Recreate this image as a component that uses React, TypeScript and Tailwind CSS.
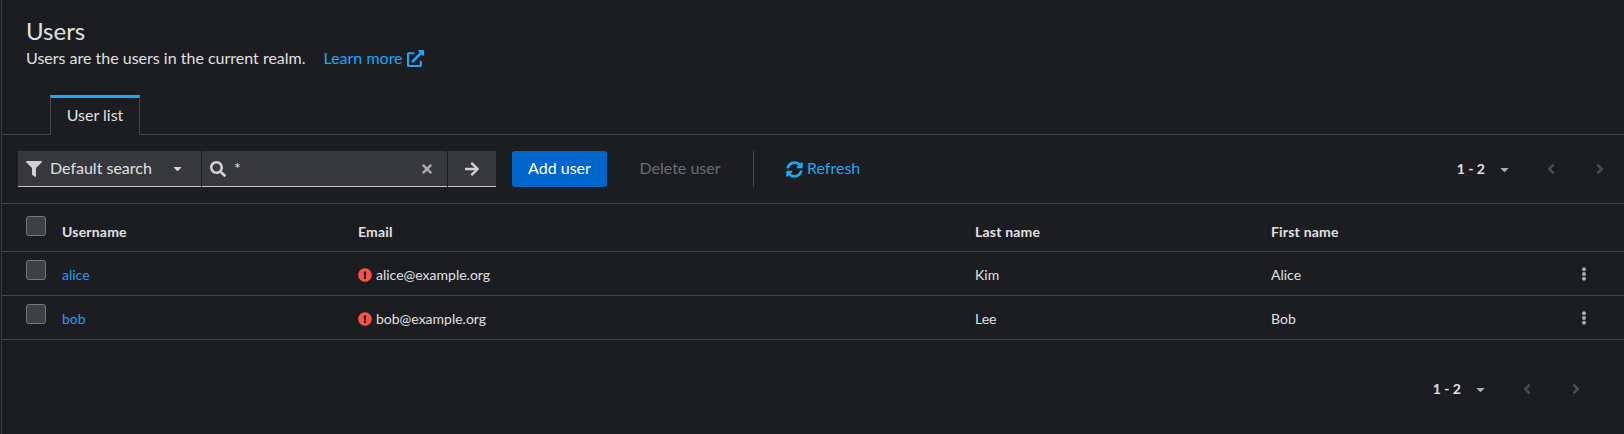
import {
  FaAngleLeft,
  FaAngleRight,
  FaArrowRight,
  FaCaretDown,
  FaEllipsisV,
  FaExclamationCircle,
  FaExternalLinkAlt,
  FaFilter,
  FaSearch,
  FaSyncAlt,
  FaTimes,
} from 'react-icons/fa';

const users = [
  { username: 'alice', email: 'alice@example.org', lastName: 'Kim', firstName: 'Alice' },
  { username: 'bob', email: 'bob@example.org', lastName: 'Lee', firstName: 'Bob' },
];

const rowGrid = 'grid grid-cols-[60px_296px_617px_296px_1fr_60px] items-center';

function Checkbox() {
  return <span className="block w-5 h-5 rounded-[3px] border border-[#77787a] bg-[#3f4042]" />;
}

function Pagination() {
  return (
    <div className="flex items-center">
      <span className="text-sm font-bold text-[#e0e0e0] whitespace-nowrap">1 - 2</span>
      <FaCaretDown className="ml-[13px] text-[13px] text-[#aaabac]" />
      <FaAngleLeft className="ml-[32px] text-base text-[#4d4e50]" />
      <FaAngleRight className="ml-[33px] text-base text-[#4d4e50]" />
    </div>
  );
}

export default function App() {
  return (
    <div className="w-[1624px] h-[434px] overflow-hidden bg-[#1b1d21] pl-px text-[#e0e0e0] font-['Lato','Noto_Sans',sans-serif]">
      <div className="h-full border-l border-[#3c3d40]">
        <div className="pl-6 pt-[15px]">
          <h1 className="text-2xl leading-[32px] text-[#e0e0e0]">Users</h1>
          <p className="flex items-center text-base leading-[22px]">
            Users are the users in the current realm.
            <a className="ml-[18px] flex items-center text-[#1fa7f8]">
              Learn more
              <FaExternalLinkAlt className="ml-1 text-[17px]" />
            </a>
          </p>
        </div>

        <div className="mt-[26px] h-10 border-b border-[#444548] pl-12">
          <div className="h-10 w-[90px] border-x border-[#444548] border-t-[3px] border-t-[#1fa7f8] bg-[#1b1d21] text-base pb-[4px] flex items-center justify-center">
            User list
          </div>
        </div>

        <div className="h-[69px] border-b border-[#444548] pl-4 pr-4 flex items-center">
          <div className="flex h-9 gap-px text-base">
            <div className="w-[183px] bg-[#36383c] border-b border-[#c5c5c6] flex items-center pl-2">
              <FaFilter className="text-base text-[#d2d2d2]" />
              <span className="ml-2 -mt-[2px]">Default search</span>
              <FaCaretDown className="ml-auto mr-[17px] text-[13px] text-[#d2d2d2]" />
            </div>
            <div className="w-[245px] bg-[#36383c] border-b border-[#c5c5c6] flex items-center pl-2">
              <FaSearch className="text-base text-[#d2d2d2]" />
              <span className="ml-2 -mt-[2px]">*</span>
              <FaTimes className="ml-auto mr-[13px] text-sm text-[#aaabac]" />
            </div>
            <div className="w-12 bg-[#36383c] border-b border-[#c5c5c6] flex items-center justify-center">
              <FaArrowRight className="text-base text-[#d2d2d2]" />
            </div>
          </div>
          <button className="ml-4 h-9 w-[95px] pb-[2px] rounded-[3px] bg-[#0066cc] text-base text-white">Add user</button>
          <button className="ml-4 h-9 w-[114px] pb-[2px] text-base text-[#6a6e73]">Delete user</button>
          <div className="ml-4 h-9 w-px bg-[#444548]" />
          <a className="ml-8 flex items-center text-base text-[#1fa7f8]">
            <FaSyncAlt className="mr-1 text-[17px]" />
            <span className="-mt-[2px]">Refresh</span>
          </a>
          <div className="ml-auto">
            <Pagination />
          </div>
        </div>

        <div className={`${rowGrid} h-12 pt-2 border-b border-[#444548] text-sm font-bold tracking-[0.2px]`}>
          <div className="pl-6 -mt-[12px]">
            <Checkbox />
          </div>
          <div>Username</div>
          <div>Email</div>
          <div>Last name</div>
          <div>First name</div>
          <div />
        </div>

        {users.map((user) => (
          <div key={user.username} className={`${rowGrid} h-11 pt-[2px] border-b border-[#444548] text-sm`}>
            <div className="pl-6 -mt-[10px]">
              <Checkbox />
            </div>
            <a className="text-[#2b9af3]">{user.username}</a>
            <div className="flex items-center">
              <FaExclamationCircle className="mr-1 text-sm text-[#fe5142]" />
              {user.email}
            </div>
            <div>{user.lastName}</div>
            <div>{user.firstName}</div>
            <div className="flex justify-end pr-[33px] -mt-[2px]">
              <FaEllipsisV className="text-sm text-[#aaabac]" />
            </div>
          </div>
        ))}

        <div className="flex justify-end pr-10 pt-[39px]">
          <Pagination />
        </div>
      </div>
    </div>
  );
}
